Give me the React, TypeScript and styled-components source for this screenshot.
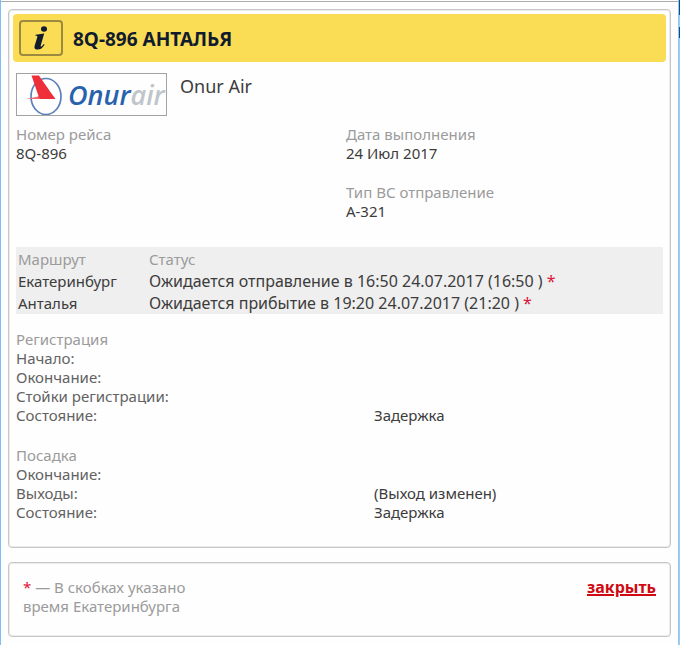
import React from "react";
import styled, { createGlobalStyle } from "styled-components";

const GlobalStyle = createGlobalStyle`
  * { box-sizing: border-box; }
  body {
    margin: 0;
    background: #fefefe;
    color: #3c3c3c;
    font-family: Tahoma, "Noto Sans", "DejaVu Sans", sans-serif;
    font-size: 15px;
    line-height: 19px;
  }
`;

const Window = styled.div`
  display: flex;
  min-height: 100vh;
  border-left: 1px solid #7fbdf5;
`;

const Content = styled.main`
  flex: 1;
  min-width: 0;
  margin-top: 1px;
  padding: 7px 7px 0 7px;
  border-top: 1px solid #adadad;
`;

const Edge = styled.div`
  width: 2px;
  border-left: 1px solid #8fc8f5;
  background: linear-gradient(
    #0a4f8c 15px, #a5cbea 15px, #a5cbea 27px, #0a4f8c 27px, #0a4f8c 38px, #a5cbea 38px
  );
`;

const Panel = styled.section`
  border: 1px solid #c6c6c6;
  border-radius: 4px;
  box-shadow: inset 0 0 0 1px #ececec;
`;

const FlightPanel = styled(Panel)`
  padding: 4px 4px 25px;
  margin-bottom: 14px;
`;

const TitleBar = styled.header`
  display: flex;
  align-items: center;
  gap: 10px;
  height: 48px;
  padding: 0 6px;
  border-radius: 4px;
  background: #fbdc55;
`;

const InfoBadge = styled.span`
  display: flex;
  align-items: center;
  justify-content: center;
  width: 44px;
  height: 36px;
  border: 2px solid #9b8a40;
  border-radius: 4px;
`;

const Title = styled.h1`
  margin: 2px 0 0;
  color: #101b2e;
  font-size: 19px;
  line-height: 24px;
`;

const Body = styled.div`
  padding: 11px 3px 0;
`;

const Airline = styled.div`
  display: flex;
  gap: 13px;
  margin-bottom: 9px;
`;

const LogoFrame = styled.div`
  width: 151px;
  height: 43px;
  border: 1px solid #a2a2a2;

  svg { display: block; }
`;

const AirlineName = styled.div`
  font-size: 18px;
  line-height: 26px;
`;

const Facts = styled.dl`
  display: grid;
  grid-template-columns: 51fr 49fr;
  row-gap: 20px;
  margin: 0 0 26px;
`;

const Fact = styled.div<{ $column?: number }>`
  grid-column: ${({ $column }) => $column ?? "auto"};
`;

const FactLabel = styled.dt`
  color: #9b9b9b;
`;

const FactValue = styled.dd`
  margin: 0;
`;

const RouteTable = styled.table`
  width: 100%;
  margin-bottom: 15px;
  border-spacing: 0;
  background: #efefef;
  text-align: left;

  th, td { padding: 1px 2px; height: 22px; }
  th { height: 23px; color: #9b9b9b; font-weight: 400; vertical-align: bottom; }
  th:first-child { width: 131px; }
`;

const Status = styled.td`
  font-size: 16px;
`;

const Star = styled.span`
  color: #e0123a;
`;

const StageGroup = styled.section`
  & + & { margin-top: 20px; }
`;

const StageTitle = styled.h2`
  margin: 0;
  color: #9b9b9b;
  font-size: 15px;
  font-weight: 400;
  line-height: 20px;
`;

const StageList = styled.dl`
  display: grid;
  grid-template-columns: 358fr 289fr;
  margin: 0;
`;

const StageLabel = styled.dt`
  color: #626262;
`;

const NotePanel = styled(Panel)`
  display: flex;
  justify-content: space-between;
  align-items: flex-start;
  padding: 15px 14px 20px;
`;

const Note = styled.p`
  margin: 0;
  color: #9b9b9b;
`;

const CloseLink = styled.a`
  color: #cf0a12;
  font-size: 16px;
  font-weight: 700;
  text-decoration-thickness: 2px;
`;

const InfoIcon = () => (
  <svg width="18" height="28" viewBox="0 0 18 28" aria-hidden="true">
    <ellipse cx="12" cy="5" rx="3" ry="2.8" fill="#101b2e" />
    <path
      d="M3.6 10.8 L12.2 9.6 L8.8 21.2 C8.4 22.8 9 23 10.1 21.9 L11.8 20 L12.6 20.7 C10.6 23.9 8.4 25.6 5.6 25.6 C2.7 25.6 2 23.8 2.8 21.2 L5.2 13.5 C5.6 12.1 5.2 11.8 3.4 11.8 Z"
      fill="#101b2e"
    />
  </svg>
);

const OnurAirLogo = () => (
  <svg width="149" height="41" viewBox="0 0 149 41" role="img" aria-label="Onur Air">
    <ellipse cx="29" cy="22.5" rx="15" ry="18" fill="none" stroke="#5c7fba" strokeWidth="1.7" />
    <path d="M14.5 1.5 H22 C25 6 32 16 38.5 25 H19 L21.5 22 Z" fill="#ee2f3a" />
    <path d="M9 25 L21.5 22.5 L23 25 Z" fill="#ee6a72" />
    <text
      x="51" y="31" fontFamily="'Open Sans', sans-serif" fontSize="27" fontStyle="italic" fontWeight="600" fill="#2862ad"
    >
      Onur<tspan fill="#bfc5ca">air</tspan>
    </text>
  </svg>
);

const routes = [
  { city: "Екатеринбург", status: "Ожидается отправление в 16:50 24.07.2017 (16:50 )" },
  { city: "Анталья", status: "Ожидается прибытие в 19:20 24.07.2017 (21:20 )" },
];

const stages = [
  {
    title: "Регистрация",
    rows: [["Начало:", ""], ["Окончание:", ""], ["Стойки регистрации:", ""], ["Состояние:", "Задержка"]],
  },
  {
    title: "Посадка",
    rows: [["Окончание:", ""], ["Выходы:", "(Выход изменен)"], ["Состояние:", "Задержка"]],
  },
];

export default function App() {
  return (
    <Window>
      <GlobalStyle />
      <Content>
        <FlightPanel>
          <TitleBar>
            <InfoBadge><InfoIcon /></InfoBadge>
            <Title>8Q-896 АНТАЛЬЯ</Title>
          </TitleBar>
          <Body>
            <Airline>
              <LogoFrame><OnurAirLogo /></LogoFrame>
              <AirlineName>Onur Air</AirlineName>
            </Airline>
            <Facts>
              <Fact><FactLabel>Номер рейса</FactLabel><FactValue>8Q-896</FactValue></Fact>
              <Fact><FactLabel>Дата выполнения</FactLabel><FactValue>24 Июл 2017</FactValue></Fact>
              <Fact $column={2}><FactLabel>Тип ВС отправление</FactLabel><FactValue>А-321</FactValue></Fact>
            </Facts>
            <RouteTable>
              <thead>
                <tr><th scope="col">Маршрут</th><th scope="col">Статус</th></tr>
              </thead>
              <tbody>
                {routes.map(({ city, status }) => (
                  <tr key={city}><td>{city}</td><Status>{status} <Star>*</Star></Status></tr>
                ))}
              </tbody>
            </RouteTable>
            {stages.map(({ title, rows }) => (
              <StageGroup key={title}>
                <StageTitle>{title}</StageTitle>
                <StageList>
                  {rows.map(([label, value]) => (
                    <React.Fragment key={label}>
                      <StageLabel>{label}</StageLabel>
                      <FactValue>{value}</FactValue>
                    </React.Fragment>
                  ))}
                </StageList>
              </StageGroup>
            ))}
          </Body>
        </FlightPanel>
        <NotePanel>
          <Note><Star>*</Star> — В скобках указано<br />время Екатеринбурга</Note>
          <CloseLink href="#">закрыть</CloseLink>
        </NotePanel>
      </Content>
      <Edge />
    </Window>
  );
}
